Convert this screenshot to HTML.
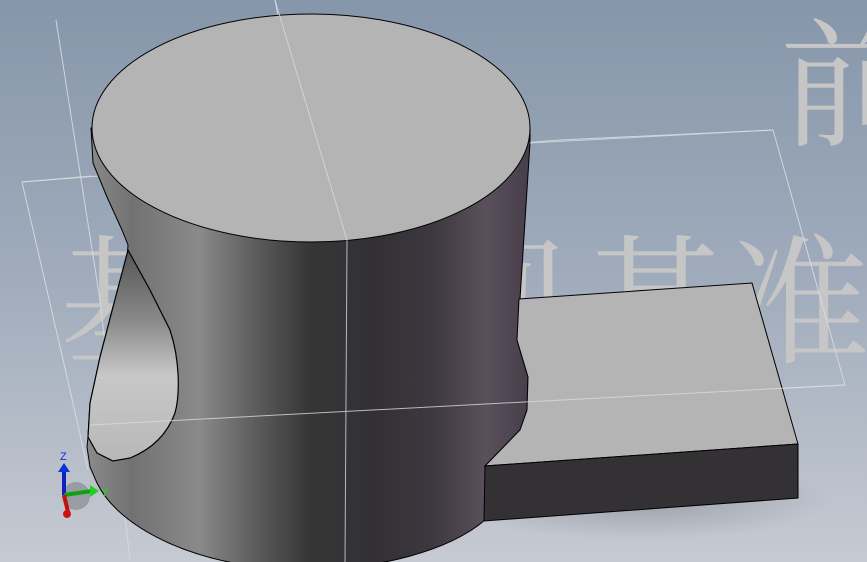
<!DOCTYPE html>
<html><head><meta charset="utf-8"><style>
html,body{margin:0;padding:0;width:867px;height:562px;overflow:hidden}
svg{display:block}
</style></head><body>
<svg width="867" height="562" viewBox="0 0 867 562" xmlns="http://www.w3.org/2000/svg">
<defs>
<linearGradient id="bg" x1="0" y1="0" x2="0" y2="1">
<stop offset="0" stop-color="#8696aa"/>
<stop offset="0.5" stop-color="#a0acbc"/>
<stop offset="1" stop-color="#c6cad2"/>
</linearGradient>
<linearGradient id="cyl" x1="88" y1="0" x2="530" y2="0" gradientUnits="userSpaceOnUse">
<stop offset="0" stop-color="#8a8a8a"/>
<stop offset="0.1" stop-color="#727272"/>
<stop offset="0.25" stop-color="#8a8a8a"/>
<stop offset="0.38" stop-color="#5c5c5c"/>
<stop offset="0.5" stop-color="#363636"/>
<stop offset="0.65" stop-color="#323034"/>
<stop offset="0.78" stop-color="#3d3840"/>
<stop offset="0.9" stop-color="#5a505c"/>
<stop offset="1" stop-color="#463e4a"/>
</linearGradient>
<linearGradient id="hole" x1="0" y1="250" x2="0" y2="460" gradientUnits="userSpaceOnUse">
<stop offset="0" stop-color="#555"/>
<stop offset="0.35" stop-color="#8c8c8c"/>
<stop offset="0.6" stop-color="#c8c8c8"/>
<stop offset="1" stop-color="#b8b8b8"/>
</linearGradient>
<radialGradient id="sh" cx="0.5" cy="0.5" r="0.5">
<stop offset="0" stop-color="#000" stop-opacity="0.18"/>
<stop offset="1" stop-color="#000" stop-opacity="0"/>
</radialGradient>
</defs>
<rect width="867" height="562" fill="url(#bg)"/>
<g font-family="'Liberation Serif','Noto Serif CJK SC',serif" font-size="140" fill="#c6c6c6">
<text x="780" y="135">前</text>
<text x="60" y="352">基</text>
<text x="430" y="352">视</text>
<text x="585" y="352">基</text>
<text x="730" y="352">准</text>
</g>
<ellipse cx="640" cy="500" rx="190" ry="40" fill="url(#sh)"/>
<g stroke="#d8dce0" stroke-width="1" fill="none" opacity="0.9">
<polyline points="56,20 100,300 130,560"/>
<polyline points="275,0 347,380 345,562"/>
<polyline points="22,182 560,140 773,130 845,385"/>
<polyline points="22,182 70,390 88,470"/>
<line x1="90" y1="425" x2="845" y2="385"/>
</g>
<path d="M91,128 L530,128 L530,143 L520,299 L517,340 L528,377 L527,410 L520,430 L485,466 L485,520 C450,550 380,570 300,570 C200,568 120,530 97,483 L90,467 L87,447 L88,437 L90,403 L100,357 L113,307 L127,260 L128,245 L122,230 L107,197 L93,163 Z" fill="url(#cyl)" stroke="#000" stroke-width="1"/>
<path d="M128,250 L150,290 L170,330 C180,360 180,395 175,413 C168,432 155,448 130,458 L113,461 L97,453 L88,437 L90,403 L100,357 L113,307 Z" fill="url(#hole)" stroke="#000" stroke-width="1.2"/>
<ellipse cx="311" cy="128" rx="219" ry="114" fill="#b4b4b4" stroke="#000" stroke-width="1"/>
<path d="M519,299 L752,283 L798,444 L485,466 L520,430 L527,410 L528,377 L517,340 Z" fill="#b4b4b4" stroke="#000" stroke-width="1"/>
<path d="M485,466 L798,444 L798,498 L484,521 Z" fill="#333134" stroke="#000" stroke-width="1"/>
<g stroke="#d8dce0" stroke-width="1" fill="none" opacity="0.8">
<line x1="275" y1="0" x2="347" y2="240"/>
<line x1="347" y1="240" x2="345" y2="562"/>
<line x1="22" y1="182" x2="92" y2="176"/>
<line x1="530" y1="143" x2="773" y2="130"/>
<line x1="90" y1="425" x2="845" y2="385"/>
</g>
<circle cx="76" cy="496" r="14" fill="#555" opacity="0.35"/>
<line x1="64" y1="495" x2="64" y2="470" stroke="#1020c0" stroke-width="4"/>
<polygon points="58,472 70,472 64,463" fill="#1030e0"/>
<text x="60" y="460" font-family="'Liberation Sans',sans-serif" font-size="11" fill="#1030e0">Z</text>
<line x1="64" y1="495" x2="92" y2="491" stroke="#10a010" stroke-width="4"/>
<polygon points="90,485 90,497 99,491" fill="#20d020"/>
<text x="101" y="496" font-family="'Liberation Sans',sans-serif" font-size="11" fill="#20e020">Y</text>
<line x1="64" y1="495" x2="68" y2="512" stroke="#c01010" stroke-width="4"/>
<circle cx="67" cy="514" r="4" fill="#d01010"/>
</svg>
</body></html>
